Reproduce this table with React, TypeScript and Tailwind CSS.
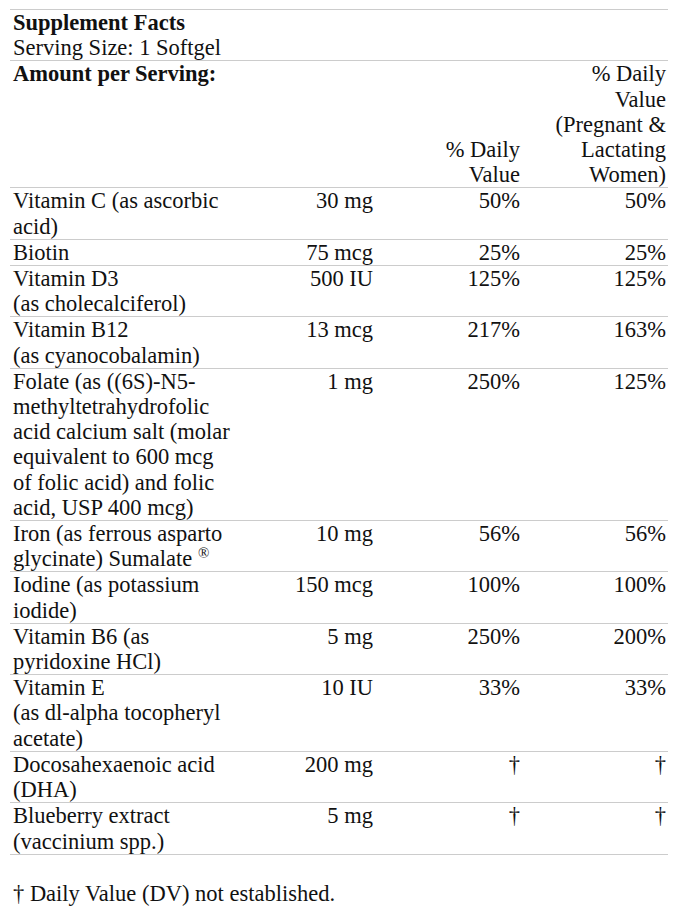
import React from "react";

type Row = { name: React.ReactNode; amt: string; dv: string; dvp: string };

const rows: Row[] = [
  { name: <>Vitamin C (as ascorbic<br />acid)</>, amt: "30 mg", dv: "50%", dvp: "50%" },
  { name: <>Biotin</>, amt: "75 mcg", dv: "25%", dvp: "25%" },
  { name: <>Vitamin D3<br />(as cholecalciferol)</>, amt: "500 IU", dv: "125%", dvp: "125%" },
  { name: <>Vitamin B12<br />(as cyanocobalamin)</>, amt: "13 mcg", dv: "217%", dvp: "163%" },
  {
    name: (
      <>
        Folate (as ((6S)-N5-<br />methyltetrahydrofolic<br />acid calcium salt (molar<br />equivalent to 600 mcg<br />of folic acid) and folic<br />acid, USP 400 mcg)
      </>
    ),
    amt: "1 mg",
    dv: "250%",
    dvp: "125%",
  },
  {
    name: (
      <>
        Iron (as ferrous asparto<br />glycinate) Sumalate{" "}
        <span className="relative top-[-8px] text-[15px] leading-none">®</span>
      </>
    ),
    amt: "10 mg",
    dv: "56%",
    dvp: "56%",
  },
  { name: <>Iodine (as potassium<br />iodide)</>, amt: "150 mcg", dv: "100%", dvp: "100%" },
  { name: <>Vitamin B6 (as<br />pyridoxine HCl)</>, amt: "5 mg", dv: "250%", dvp: "200%" },
  { name: <>Vitamin E<br />(as dl-alpha tocopheryl<br />acetate)</>, amt: "10 IU", dv: "33%", dvp: "33%" },
  { name: <>Docosahexaenoic acid<br />(DHA)</>, amt: "200 mg", dv: "†", dvp: "†" },
  { name: <>Blueberry extract<br />(vaccinium spp.)</>, amt: "5 mg", dv: "†", dvp: "†" },
];

const grid = "grid grid-cols-[220px_145px_147px_146px] border-b border-[#cccccc]";

export default function App() {
  return (
    <div
      className="min-h-[914px] bg-white pl-[10px] pt-[9px] text-[#111111] text-[22.5px] leading-[25.2px]"
      style={{ fontFamily: '"Liberation Serif", "Times New Roman", serif' }}
    >
      <div className="w-[658px] border-t border-[#cccccc]">
        <div className="border-b border-[#cccccc] px-[3px]">
          <div className="font-bold">Supplement Facts</div>
          <div>Serving Size: 1 Softgel</div>
        </div>
        <div className={grid}>
          <div className="pl-[3px] font-bold whitespace-nowrap">Amount per Serving:</div>
          <div />
          <div className="flex flex-col justify-end pr-[2px] text-right">
            <div>% Daily</div>
            <div>Value</div>
          </div>
          <div className="pr-[2px] text-right">
            <div>% Daily</div>
            <div>Value</div>
            <div>(Pregnant &amp;</div>
            <div>Lactating</div>
            <div>Women)</div>
          </div>
        </div>
        {rows.map((r, i) => (
          <div key={i} className={grid}>
            <div className="pl-[3px] whitespace-nowrap">{r.name}</div>
            <div className="pr-[2px] text-right">{r.amt}</div>
            <div className="pr-[2px] text-right">{r.dv}</div>
            <div className="pr-[2px] text-right">{r.dvp}</div>
          </div>
        ))}
      </div>
      <p className="mt-[26px] pl-[3px]">† Daily Value (DV) not established.</p>
    </div>
  );
}
